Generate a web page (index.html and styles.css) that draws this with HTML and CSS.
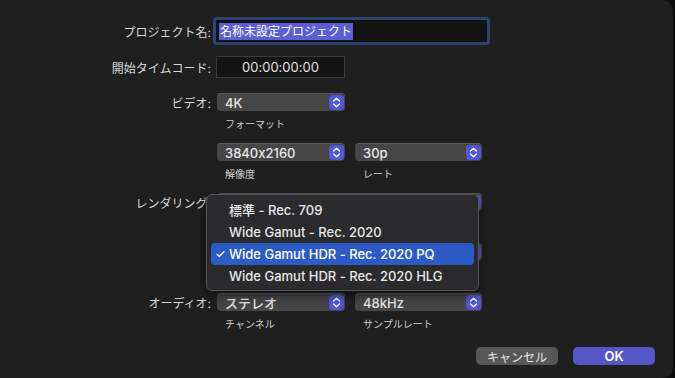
FILE: index.html
```html
<!DOCTYPE html>
<html>
<head>
    <title>新規プロジェクト</title>
    <link rel="stylesheet" href="styles.css">
</head>
<body>
    <div class="window">
        <div class="form">
            <div class="row name-row">
                <div class="label">プロジェクト名:</div>
                <div class="name-field"><span class="selected">名称未設定プロジェクト</span></div>
            </div>
            <div class="row tc-row">
                <div class="label">開始タイムコード:</div>
                <div class="tc-field">00:00:00:00</div>
            </div>

            <div class="group">
                <div class="row">
                    <div class="label">ビデオ:</div>
                    <div class="popup">4K<span class="stepper"><svg width="9" height="11" viewBox="0 0 9 11"><path d="M1.5 4 4.5 1.2 7.5 4M1.5 7 4.5 9.8 7.5 7" fill="none" stroke="#fff" stroke-width="1.3" stroke-linecap="round" stroke-linejoin="round"/></svg></span></div>
                </div>
                <div class="captions"><span>フォーマット</span></div>
            </div>

            <div class="group">
                <div class="row">
                    <div class="label"></div>
                    <div class="popup">3840x2160<span class="stepper"><svg width="9" height="11" viewBox="0 0 9 11"><path d="M1.5 4 4.5 1.2 7.5 4M1.5 7 4.5 9.8 7.5 7" fill="none" stroke="#fff" stroke-width="1.3" stroke-linecap="round" stroke-linejoin="round"/></svg></span></div>
                    <div class="popup">30p<span class="stepper"><svg width="9" height="11" viewBox="0 0 9 11"><path d="M1.5 4 4.5 1.2 7.5 4M1.5 7 4.5 9.8 7.5 7" fill="none" stroke="#fff" stroke-width="1.3" stroke-linecap="round" stroke-linejoin="round"/></svg></span></div>
                </div>
                <div class="captions"><span>解像度</span><span>レート</span></div>
            </div>

            <!-- rows hidden behind the open menu -->
            <div class="group">
                <div class="row">
                    <div class="label">レンダリング:</div>
                    <div class="popup wide"><span></span><span class="stepper"></span></div>
                </div>
                <div class="captions"></div>
            </div>

            <div class="group">
                <div class="row">
                    <div class="label"></div>
                    <div class="popup wide"><span></span><span class="stepper"></span></div>
                </div>
                <div class="captions"></div>
            </div>

            <div class="group">
                <div class="row">
                    <div class="label">オーディオ:</div>
                    <div class="popup">ステレオ<span class="stepper"><svg width="9" height="11" viewBox="0 0 9 11"><path d="M1.5 4 4.5 1.2 7.5 4M1.5 7 4.5 9.8 7.5 7" fill="none" stroke="#fff" stroke-width="1.3" stroke-linecap="round" stroke-linejoin="round"/></svg></span></div>
                    <div class="popup">48kHz<span class="stepper"><svg width="9" height="11" viewBox="0 0 9 11"><path d="M1.5 4 4.5 1.2 7.5 4M1.5 7 4.5 9.8 7.5 7" fill="none" stroke="#fff" stroke-width="1.3" stroke-linecap="round" stroke-linejoin="round"/></svg></span></div>
                </div>
                <div class="captions"><span>チャンネル</span><span>サンプルレート</span></div>
            </div>
        </div>

        <div class="buttons">
            <button class="btn cancel">キャンセル</button>
            <button class="btn ok">OK</button>
        </div>

        <div class="menu">
            <div class="menu-item">標準 - Rec. 709</div>
            <div class="menu-item">Wide Gamut - Rec. 2020</div>
            <div class="menu-item active"><span class="check">✓</span>Wide Gamut HDR - Rec. 2020 PQ</div>
            <div class="menu-item">Wide Gamut HDR - Rec. 2020 HLG</div>
        </div>
    </div>
</body>
</html>
```

FILE: styles.css
```css
body {
    margin: 0;
    background-color: #0c0c0c;
    font-family: "Inter", "Noto Sans CJK JP", sans-serif;
    font-feature-settings: "calt" 0;
    color: #dedede;
}
.window {
    position: relative;
    width: 673px;
    height: 378px;
    background-color: #1f1f1f;
    border-radius: 0 10px 10px 0;
    overflow: hidden;
}
.form {
    padding-top: 17px;
}
.row {
    display: flex;
    align-items: center;
    height: 18px;
}
.label {
    width: 211px;
    flex: none;
    text-align: right;
    font-size: 12px;
    color: #d8d8d8;
    white-space: nowrap;
}
.name-row {
    height: 28px;
}
.name-field {
    margin-left: 2px;
    width: 268px;
    height: 22px;
    border: 3px solid #2c4570;
    border-radius: 4px;
    background-color: #121212;
    display: flex;
    align-items: center;
    padding-left: 3px;
}
.selected {
    background-color: #5b5fd6;
    color: #fff;
    font-size: 12px;
    line-height: 17px;
    padding: 0 1px;
}
.tc-row {
    margin-top: 11px;
    height: 22px;
}
.tc-field {
    margin-left: 5px;
    width: 127px;
    height: 20px;
    border: 1px solid #3a3a3a;
    background-color: #141414;
    font-size: 13px;
    line-height: 20px;
    text-align: center;
    color: #e2e2e2;
}
.group {
    margin-top: 12px;
}
.tc-row + .group {
    margin-top: 15px;
}
.popup {
    margin-left: 6px;
    width: 128px;
    height: 18px;
    box-sizing: border-box;
    border-radius: 4px;
    background-color: #464646;
    border-top: 1px solid #595959;
    display: flex;
    align-items: center;
    justify-content: space-between;
    padding: 0 1px 0 8px;
    font-size: 13px;
    font-weight: 500;
    color: #e8e8e8;
}
.popup + .popup {
    margin-left: 10px;
    width: 127px;
}
.popup.wide {
    width: 265px;
}
.stepper {
    width: 15px;
    height: 15px;
    border-radius: 4px;
    background-color: #5157d8;
    display: flex;
    align-items: center;
    justify-content: center;
}
.captions {
    display: flex;
    margin-top: 6px;
    padding-left: 217px;
    height: 14px;
    font-size: 10px;
    line-height: 14px;
    color: #cfcfcf;
}
.captions span {
    width: 138px;
    padding-left: 8px;
    box-sizing: border-box;
}
.buttons {
    display: flex;
    justify-content: flex-end;
    gap: 15px;
    margin-top: 16px;
    padding-right: 18px;
}
.btn {
    width: 82px;
    height: 18px;
    border: none;
    border-radius: 5px;
    font-family: "Inter", "Noto Sans CJK JP", sans-serif;
    font-size: 12px;
    color: #e8e8e8;
    padding: 0;
}
.cancel {
    background-color: #575757;
}
.ok {
    background-color: #5557c6;
    color: #fff;
    font-weight: 600;
    font-size: 13px;
}
.menu {
    position: absolute;
    left: 206px;
    top: 194px;
    width: 273px;
    height: 97px;
    box-sizing: border-box;
    padding: 4px 4px;
    background-color: #2b2b2d;
    border: 1px solid #58585a;
    border-radius: 6px;
    box-shadow: 0 4px 12px rgba(0, 0, 0, 0.5);
}
.menu-item {
    position: relative;
    height: 22px;
    line-height: 22px;
    padding-left: 18px;
    border-radius: 4px;
    font-size: 13px;
    font-weight: 500;
    color: #e8e8e8;
    white-space: nowrap;
}
.menu-item.active {
    background-color: #2d5bc6;
    color: #fff;
}
.check {
    position: absolute;
    left: 4px;
    font-size: 12px;
}
```
